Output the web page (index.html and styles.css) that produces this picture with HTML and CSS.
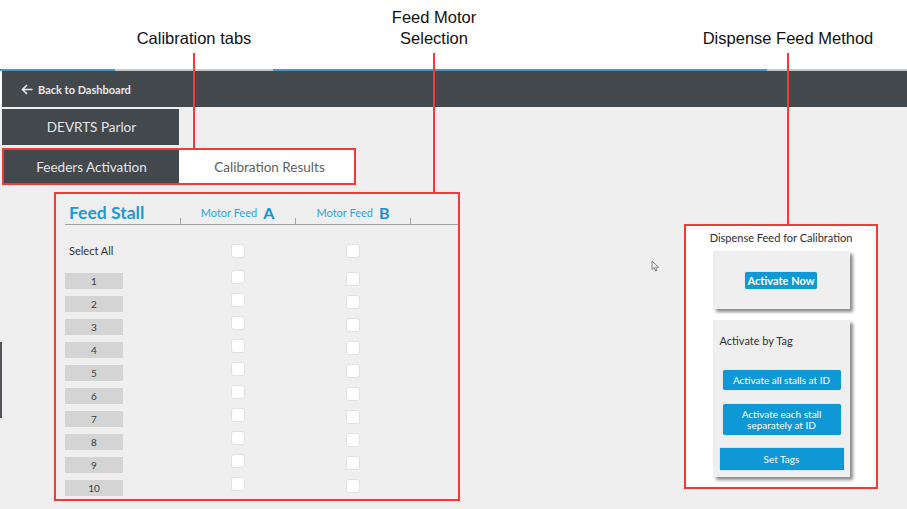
FILE: index.html
```html
<!DOCTYPE html>
<html>
<head>
<meta charset="utf-8">
<link rel="stylesheet" href="styles.css">
</head>
<body>
<div class="page">
  <div class="annot-space"></div>
  <div class="accent"></div>
  <nav class="navbar">
    <span class="back">
      <svg class="back-icon" width="12" height="11" viewBox="0 0 12 11"><path d="M11.5 5.5H1.5M6 1L1.5 5.5L6 10" fill="none" stroke="#e8e8e8" stroke-width="1.7"/></svg>
      Back to Dashboard
    </span>
  </nav>
  <main class="main">
    <div class="parlor">DEVRTS Parlor</div>
    <div class="tabs">
      <div class="tab tab-active">Feeders Activation</div>
      <div class="tab tab-plain">Calibration Results</div>
    </div>
    <div class="content">
      <section class="feed">
        <div class="feed-head">
          <div class="hcol hcol-first"><span class="feed-title">Feed Stall</span></div>
          <div class="hcol hcol-mid"><span class="motor">Motor Feed</span><span class="motor-letter">A</span></div>
          <div class="hcol hcol-last"><span class="motor">Motor Feed</span><span class="motor-letter">B</span></div>
        </div>
        <div class="grid">
          <div class="select-all">Select All</div><div class="cb cb-a cb-sel"></div><div class="cb cb-b cb-sel"></div>
          <div class="stall">1</div><div class="cb cb-a"></div><div class="cb cb-b"></div>
          <div class="stall">2</div><div class="cb cb-a"></div><div class="cb cb-b"></div>
          <div class="stall">3</div><div class="cb cb-a"></div><div class="cb cb-b"></div>
          <div class="stall">4</div><div class="cb cb-a"></div><div class="cb cb-b"></div>
          <div class="stall">5</div><div class="cb cb-a"></div><div class="cb cb-b"></div>
          <div class="stall">6</div><div class="cb cb-a"></div><div class="cb cb-b"></div>
          <div class="stall">7</div><div class="cb cb-a"></div><div class="cb cb-b"></div>
          <div class="stall">8</div><div class="cb cb-a"></div><div class="cb cb-b"></div>
          <div class="stall">9</div><div class="cb cb-a"></div><div class="cb cb-b"></div>
          <div class="stall">10</div><div class="cb cb-a"></div><div class="cb cb-b"></div>
        </div>
      </section>
      <aside class="dispense">
        <div class="disp-title">Dispense Feed for Calibration</div>
        <div class="card card-now">
          <button class="btn btn-now">Activate Now</button>
        </div>
        <div class="card card-tag">
          <div class="tag-title">Activate by Tag</div>
          <button class="btn btn-all">Activate all stalls at ID</button>
          <button class="btn btn-each">Activate each stall<br>separately at ID</button>
          <button class="btn btn-set">Set Tags</button>
        </div>
      </aside>
    </div>
    <div class="side-sliver"></div>
    <svg class="cursor" width="9" height="12" viewBox="0 0 9 12"><path d="M1 1V9.5L3.2 7.6L4.8 11L6.1 10.4L4.6 7.2H7.6Z" fill="#f4f4f4" stroke="#777" stroke-width="0.9" stroke-linejoin="round"/></svg>
  </main>

  <div class="callout callout-tabs">Calibration tabs</div>
  <div class="callout callout-motor">Feed Motor<br>Selection</div>
  <div class="callout callout-disp">Dispense Feed Method</div>
  <div class="cline cline-tabs"></div>
  <div class="cline cline-motor"></div>
  <div class="cline cline-disp"></div>
</div>
</body>
</html>
```

FILE: styles.css
```css
* { box-sizing: border-box; }
html, body { margin: 0; padding: 0; }
body {
  width: 907px;
  height: 509px;
  overflow: hidden;
  background: #ffffff;
  font-family: Lato, "Noto Sans", sans-serif;
}
.page { position: relative; width: 907px; height: 509px; }

.annot-space { height: 69px; }
.accent {
  height: 2px;
  background: linear-gradient(to right,
    #3b9bc9 0, #3b9bc9 115px,
    #c8c8c8 115px, #c8c8c8 273px,
    #3b9bc9 273px, #3b9bc9 767px,
    #c8c8c8 767px, #c8c8c8 100%);
}
.navbar {
  height: 36px;
  margin-left: 2px;
  background: #43484c;
  display: flex;
  align-items: center;
  padding-left: 19px;
}
.back {
  display: flex;
  align-items: center;
  gap: 5px;
  color: #e8e8e8;
  font-size: 11px;
  font-weight: 700;
}
.back-icon { display: block; }

.main {
  position: relative;
  height: 402px;
  background: #efefef;
  padding-top: 2px;
}
.parlor {
  width: 177px;
  height: 36px;
  margin-left: 2px;
  background: #43484c;
  color: #e6e6e6;
  font-size: 13.5px;
  display: flex;
  align-items: center;
  justify-content: center;
  padding-left: 2px;
}
.tabs {
  margin-top: 3px;
  margin-left: 2px;
  width: 354px;
  height: 37px;
  display: flex;
  outline: 2px solid #f23a3a;
  outline-offset: -2px;
}
.tab {
  width: 177px;
  display: flex;
  align-items: center;
  justify-content: center;
  font-size: 13.5px;
}
.tab-active { background: #43484c; color: #e6e6e6; padding-left: 2px; }
.tab-plain { background: #ffffff; color: #5a5f63; padding-left: 4px; }

.content {
  display: flex;
  align-items: flex-start;
  padding-left: 54px;
  padding-right: 29px;
  margin-top: 7px;
}

/* Feed stall panel */
.feed {
  width: 406px;
  height: 309px;
  border: 2px solid #f23a3a;
  padding: 6px 0 0 9px;
}
.feed-head {
  display: grid;
  grid-template-columns: 115px 115px 116px;
  height: 25px;
  border-bottom: 1px solid #a3a3a3;
}
.hcol {
  position: relative;
  display: flex;
  align-items: center;
  justify-content: center;
  gap: 6px;
  color: #1c9ad6;
}
.hcol-first { justify-content: flex-start; padding-left: 4px; }
.hcol-mid::before, .hcol-last::before, .hcol-last::after {
  content: "";
  position: absolute;
  bottom: -1px;
  width: 1px;
  height: 7px;
  background: #a3a3a3;
}
.hcol-mid::before, .hcol-last::before { left: 0; }
.hcol-last::after { right: 0; }
.feed-title { font-size: 17.5px; font-weight: 700; color: #1c9ad6; }
.motor { font-size: 11px; color: #2ea3db; }
.motor-letter { font-size: 16px; font-weight: 700; color: #1493d2; }

.grid {
  display: grid;
  grid-template-columns: 115px 115px 116px;
  grid-template-rows: 29px repeat(10, 23px);
  margin-top: 19px;
}
.select-all {
  font-size: 11px;
  line-height: 14px;
  color: #2f2f2f;
  padding-left: 4px;
}
.stall {
  width: 58px;
  height: 16px;
  background: #d4d4d4;
  color: #3a3a3a;
  font-size: 10px;
  display: flex;
  align-items: center;
  justify-content: center;
}
.cb {
  width: 14px;
  height: 14px;
  justify-self: center;
  background: #ffffff;
  border: 1px solid #e2e2e2;
  border-radius: 3px;
}
.cb-a { margin-top: -3px; }
.cb-b { margin-top: -1px; }
.cb-sel { margin-top: 0; }

/* Dispense panel */
.dispense {
  width: 194px;
  height: 265px;
  margin-left: auto;
  margin-top: 32px;
  border: 2px solid #f23a3a;
  background: #ffffff;
  padding-top: 4px;
}
.disp-title {
  text-align: center;
  font-size: 11px;
  line-height: 16px;
  color: #2f2f2f;
}
.card {
  width: 137px;
  margin-left: auto;
  margin-right: auto;
  background: #efefef;
  box-shadow: 3px 3px 3px rgba(0, 0, 0, 0.45);
}
.card-now {
  height: 58px;
  margin-top: 5px;
  display: flex;
  align-items: center;
  justify-content: center;
}
.card-tag {
  height: 157px;
  margin-top: 11px;
  padding-top: 13px;
  display: flex;
  flex-direction: column;
}
.tag-title {
  font-size: 11px;
  line-height: 16px;
  color: #2f2f2f;
  padding-left: 7px;
}
.btn {
  border: none;
  background: #0e98d5;
  color: #ffffff;
  font-family: Lato, "Noto Sans", sans-serif;
  padding: 0;
  border-radius: 2px;
  box-shadow: 0 0 1px rgba(0, 0, 0, 0.3);
}
.btn-now {
  width: 72px;
  height: 17px;
  font-size: 11px;
  font-weight: 700;
}
.btn-all, .btn-each {
  width: 118px;
  margin-left: 10px;
  font-size: 10px;
  line-height: 11px;
}
.btn-all { height: 20px; margin-top: 21px; }
.btn-each { height: 31px; margin-top: 14px; }
.btn-set {
  width: 124px;
  height: 22px;
  margin-left: 7px;
  margin-top: 13px;
  font-size: 10px;
  border-radius: 0;
}

.side-sliver {
  position: absolute;
  left: 0;
  top: 235px;
  width: 2px;
  height: 76px;
  background: #50565b;
}
.cursor {
  position: absolute;
  left: 651px;
  top: 153px;
}

/* Annotation callouts */
.callout {
  position: absolute;
  font-family: "Liberation Sans", Arial, sans-serif;
  font-size: 16.5px;
  line-height: 21px;
  color: #111111;
  text-align: center;
  white-space: nowrap;
  transform: translateX(-50%);
}
.callout-tabs { left: 194px; top: 28px; }
.callout-motor { left: 434px; top: 7px; }
.callout-disp { left: 788px; top: 28px; }
.cline {
  position: absolute;
  top: 53px;
  width: 2px;
  background: #f23a3a;
}
.cline-tabs { left: 193px; height: 95px; }
.cline-motor { left: 433px; height: 139px; }
.cline-disp { left: 787px; height: 171px; }
```
